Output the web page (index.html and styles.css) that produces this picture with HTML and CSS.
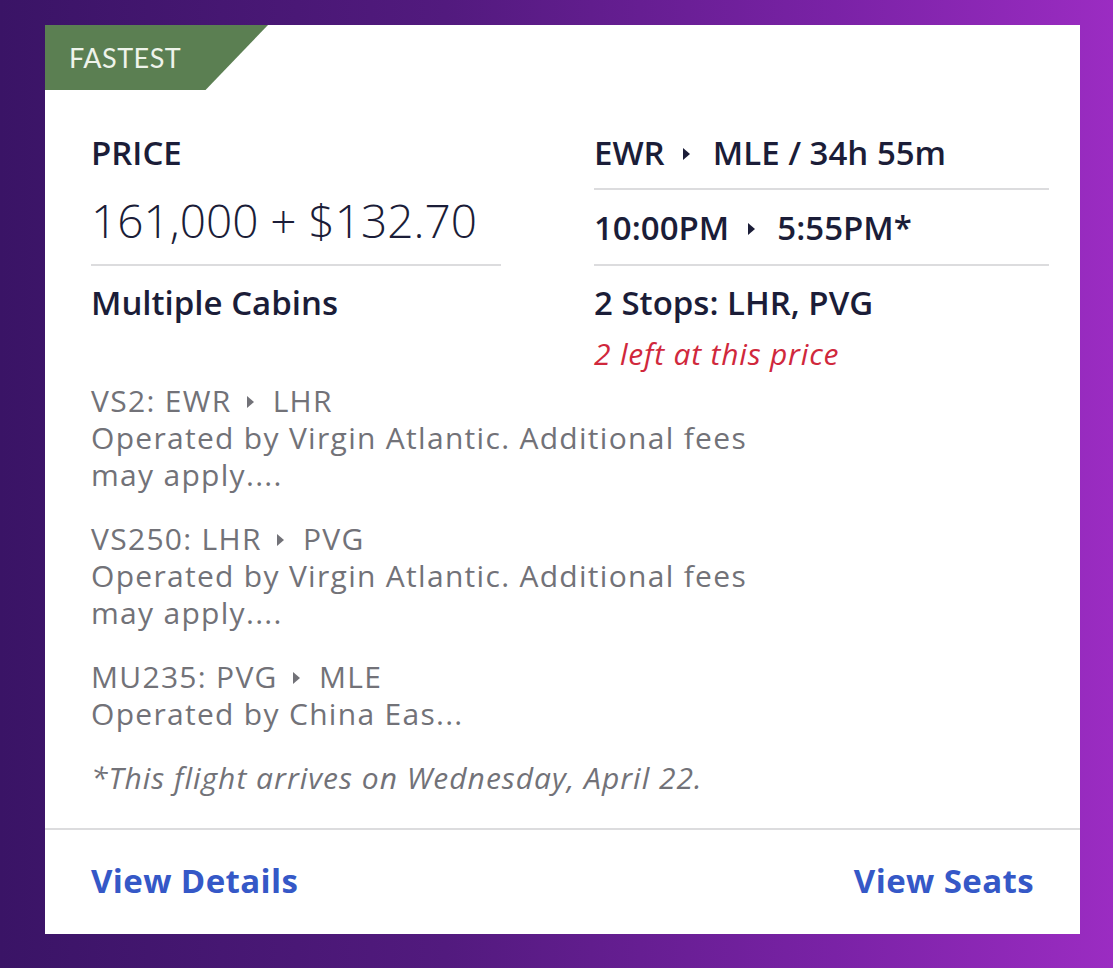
FILE: index.html
```html
<!DOCTYPE html>
<html lang="en">
<head>
<meta charset="utf-8">
<title>Flight result</title>
<link rel="stylesheet" href="styles.css">
</head>
<body>
<div class="card">
  <div class="badge">FASTEST</div>
  <div class="summary">
    <div class="cell label">PRICE</div>
    <div class="cell route border">EWR <span class="tri"></span> MLE / 34h 55m</div>
    <div class="cell price border">161,000 + $132.70</div>
    <div class="cell times border">10:00PM <span class="tri"></span> 5:55PM*</div>
    <div class="cell cabins">Multiple Cabins</div>
    <div class="cell stops">2 Stops: LHR, PVG
      <div class="left">2 left at this price</div>
    </div>
  </div>
  <div class="segments">
    <div class="seg">
      <div>VS2: EWR <span class="tri small"></span> LHR</div>
      <div>Operated by Virgin Atlantic. Additional fees</div>
      <div>may apply....</div>
    </div>
    <div class="seg">
      <div>VS250: LHR <span class="tri small"></span> PVG</div>
      <div>Operated by Virgin Atlantic. Additional fees</div>
      <div>may apply....</div>
    </div>
    <div class="seg">
      <div>MU235: PVG <span class="tri small"></span> MLE</div>
      <div>Operated by China Eas...</div>
    </div>
    <div class="note">*This flight arrives on Wednesday, April 22.</div>
  </div>
  <div class="footer">
    <a class="link">View Details</a>
    <a class="link">View Seats</a>
  </div>
</div>
</body>
</html>
```

FILE: styles.css
```css
* { box-sizing: border-box; }
html, body { margin: 0; padding: 0; }
body {
  width: 1113px;
  height: 968px;
  overflow: hidden;
  background: linear-gradient(90deg, #3a1466 0%, #521a7e 40%, #7a22a6 75%, #9b2cc2 100%);
  font-family: "Open Sans", Lato, sans-serif;
  padding: 25px 33px 0 45px;
}
.card {
  width: 1035px;
  height: 909px;
  background: #fff;
  display: flex;
  flex-direction: column;
}
.badge {
  width: 223px;
  height: 65px;
  background: #5b7f52;
  color: #eef3ea;
  font-family: Lato, sans-serif;
  font-size: 27px;
  line-height: 65px;
  padding-left: 24px;
  letter-spacing: 0.5px;
  clip-path: polygon(0 0, 100% 0, 72% 100%, 0 100%);
}
.summary {
  display: grid;
  grid-template-columns: 410px 455px;
  grid-template-rows: 55px 76px auto;
  column-gap: 93px;
  padding: 45px 0 0 46px;
  color: #1b1d38;
}
.cell { font-weight: 600; font-size: 33px; line-height: 36px; }
.border { border-bottom: 2px solid #dcdcde; }
.price { font-weight: 300; font-size: 46px; line-height: 56px; padding-top: 2px; }
.times { padding-top: 20px; }
.cabins, .stops { padding-top: 19px; }
.left {
  color: #d0283c;
  font-weight: 400;
  font-style: italic;
  font-size: 30px;
  letter-spacing: 0.8px;
  margin-top: 15px;
}
.tri {
  display: inline-block;
  width: 0; height: 0;
  border-top: 6px solid transparent;
  border-bottom: 6px solid transparent;
  border-left: 7px solid currentColor;
  vertical-align: middle;
  margin: -4px 14px 0 10px;
}
.tri.small { margin: -4px 10px 0 6px; }
.segments {
  padding: 10px 0 0 46px;
  color: #727278;
  font-size: 30px;
  letter-spacing: 1.3px;
  line-height: 37px;
  flex: 1;
}
.seg { margin-bottom: 27px; }
.note { font-style: italic; letter-spacing: 1px; }
.footer {
  border-top: 2px solid #dcdcde;
  display: flex;
  justify-content: space-between;
  padding: 0 46px 4px 46px;
  height: 106px;
  align-items: center;
}
.link {
  color: #3558c7;
  font-weight: 700;
  font-size: 33px;
  letter-spacing: 0.4px;
}
```
